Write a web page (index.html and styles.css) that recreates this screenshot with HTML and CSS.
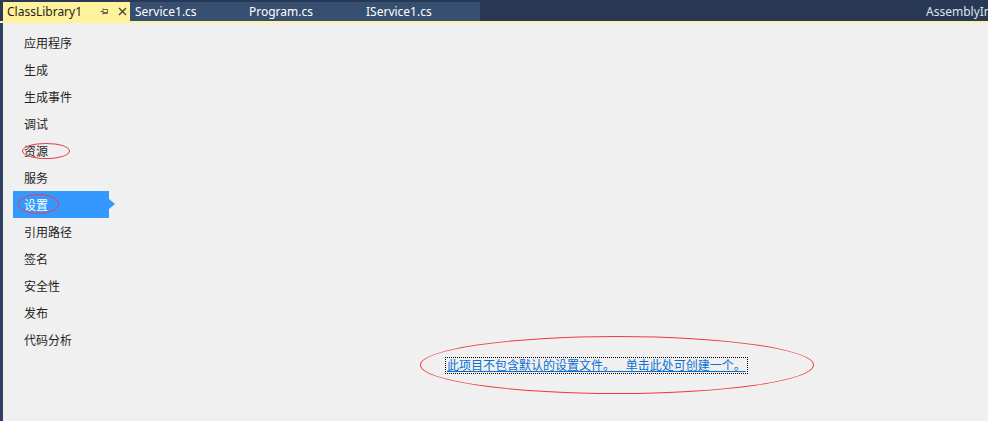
FILE: index.html
```html
<!DOCTYPE html>
<html lang="zh">
<head>
<meta charset="utf-8">
<link rel="stylesheet" href="styles.css">
</head>
<body>
<div class="app">
  <div class="tabbar">
    <div class="tab active">
      <span class="tab-title">ClassLibrary1</span>
      <span class="pin">
        <svg width="9" height="9" viewBox="0 0 9 9"><path d="M0.5 4.5H3M3 1.5V7.5M3 2.5H7.5V6.5H3M3 5.5H7.5" fill="none" stroke="#6b6b4a" stroke-width="1"/></svg>
      </span>
      <span class="close">
        <svg width="9" height="9" viewBox="0 0 9 9"><path d="M1 1L8 8M8 1L1 8" stroke="#444" stroke-width="1.4"/></svg>
      </span>
    </div>
    <div class="tabs-rest">
      <div class="tab">Service1.cs</div>
      <div class="tab">Program.cs</div>
      <div class="tab">IService1.cs</div>
    </div>
    <div class="spacer"></div>
    <div class="tab right">AssemblyIn</div>
  </div>
  <div class="main">
    <div class="sidebar">
      <div class="nav-item">应用程序</div>
      <div class="nav-item">生成</div>
      <div class="nav-item">生成事件</div>
      <div class="nav-item">调试</div>
      <div class="nav-item"><span class="mark mark-a"></span>资源</div>
      <div class="nav-item">服务</div>
      <div class="nav-item selected"><span class="mark mark-b"></span>设置</div>
      <div class="nav-item">引用路径</div>
      <div class="nav-item">签名</div>
      <div class="nav-item">安全性</div>
      <div class="nav-item">发布</div>
      <div class="nav-item">代码分析</div>
    </div>
    <div class="content">
      <div class="link-wrap">
        <span class="ellipse"></span>
        <a class="link">此项目不包含默认的设置文件。 单击此处可创建一个。</a>
      </div>
    </div>
  </div>
</div>
</body>
</html>
```

FILE: styles.css
```css
html, body {
  margin: 0;
  padding: 0;
  width: 988px;
  height: 421px;
  overflow: hidden;
  background: #f0f0f0;
}
.app {
  width: 988px;
  height: 421px;
  display: flex;
  flex-direction: column;
  font-family: "Noto Sans", "Open Sans", "Noto Sans CJK SC", sans-serif;
}
.tabbar {
  height: 21px;
  background: #293955;
  display: flex;
  align-items: flex-end;
  border-bottom: 2px solid #fff29d;
  padding-left: 3px;
  flex-shrink: 0;
}
.tab {
  height: 19px;
  display: flex;
  align-items: center;
  font-size: 12px;
  color: #ffffff;
  white-space: nowrap;
}
.tab.active {
  width: 127px;
  background: #fff29d;
  color: #1e1e1e;
  padding-left: 4px;
  box-sizing: border-box;
}
.tab-title {
  width: 87px;
}
.pin {
  display: flex;
  width: 9px;
  margin-left: 6px;
}
.close {
  display: flex;
  width: 9px;
  margin-left: 9px;
}
.tabs-rest {
  display: flex;
  background: #364e6f;
  width: 350px;
  height: 19px;
}
.tabs-rest .tab {
  padding-left: 5px;
  box-sizing: border-box;
}
.tabs-rest .tab:nth-child(1) { width: 114px; }
.tabs-rest .tab:nth-child(2) { width: 117px; }
.tabs-rest .tab:nth-child(3) { width: 119px; }
.spacer { flex: 1; }
.tab.right {
  width: 62px;
  overflow: hidden;
  color: #dce3ee;
}
.main {
  flex: 1;
  display: flex;
  border-left: 3px solid #2f4163;
  background: #f0f0f0;
}
.sidebar {
  width: 112px;
  padding-top: 6px;
  padding-left: 10px;
  display: flex;
  flex-direction: column;
  flex-shrink: 0;
  box-sizing: border-box;
}
.nav-item {
  position: relative;
  height: 27px;
  width: 96px;
  box-sizing: border-box;
  padding-left: 11px;
  display: flex;
  align-items: center;
  font-family: "Noto Sans CJK SC", sans-serif;
  font-size: 12px;
  color: #1e1e1e;
}
.nav-item.selected {
  background: #3399ff;
  color: #ffffff;
}
.nav-item.selected::after {
  content: "";
  position: absolute;
  right: -6px;
  top: 8px;
  border-top: 5px solid transparent;
  border-bottom: 5px solid transparent;
  border-left: 6px solid #3399ff;
}
.mark {
  position: absolute;
  border: 1px solid #e8414a;
  border-radius: 50%;
}
.mark-a {
  left: 9px;
  top: 6px;
  width: 46px;
  height: 14px;
}
.mark-b {
  left: 5px;
  top: 3px;
  width: 39px;
  height: 18px;
}
.content {
  flex: 1;
  position: relative;
}
.link-wrap {
  position: absolute;
  left: 305px;
  top: 313px;
  width: 394px;
  height: 58px;
}
.ellipse {
  position: absolute;
  inset: 0;
  border: 1px solid #ee3b3b;
  border-radius: 50%;
}
.link {
  position: absolute;
  left: 26px;
  top: 22px;
  height: 15px;
  line-height: 14px;
  padding: 0 1px;
  outline: 1px dotted #000;
  font-family: "Noto Sans CJK SC", sans-serif;
  font-size: 12px;
  color: #0a6fd0;
  text-decoration: underline;
  white-space: nowrap;
  word-spacing: 8px;
}
```
